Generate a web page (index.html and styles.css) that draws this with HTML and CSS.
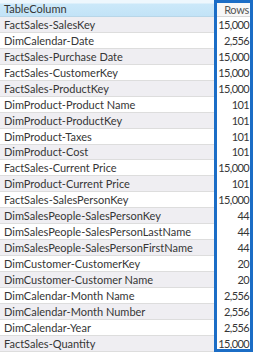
FILE: index.html
```html
<!DOCTYPE html>
<html>
<head>
<meta charset="utf-8">
<link rel="stylesheet" href="styles.css">
</head>
<body>
<div class="grid">
  <div class="col-name">
    <div class="hdr">TableColumn</div>
    <div class="cell">FactSales-SalesKey</div>
    <div class="cell">DimCalendar-Date</div>
    <div class="cell">FactSales-Purchase Date</div>
    <div class="cell">FactSales-CustomerKey</div>
    <div class="cell">FactSales-ProductKey</div>
    <div class="cell">DimProduct-Product Name</div>
    <div class="cell">DimProduct-ProductKey</div>
    <div class="cell">DimProduct-Taxes</div>
    <div class="cell">DimProduct-Cost</div>
    <div class="cell">FactSales-Current Price</div>
    <div class="cell">DimProduct-Current Price</div>
    <div class="cell">FactSales-SalesPersonKey</div>
    <div class="cell">DimSalesPeople-SalesPersonKey</div>
    <div class="cell">DimSalesPeople-SalesPersonLastName</div>
    <div class="cell">DimSalesPeople-SalesPersonFirstName</div>
    <div class="cell">DimCustomer-CustomerKey</div>
    <div class="cell">DimCustomer-Customer Name</div>
    <div class="cell">DimCalendar-Month Name</div>
    <div class="cell">DimCalendar-Month Number</div>
    <div class="cell">DimCalendar-Year</div>
    <div class="cell">FactSales-Quantity</div>
  </div>
  <div class="col-rows">
    <div class="hdr hdr-rows">Rows</div>
    <div class="cell num">15,000</div>
    <div class="cell num">2,556</div>
    <div class="cell num">15,000</div>
    <div class="cell num">15,000</div>
    <div class="cell num">15,000</div>
    <div class="cell num">101</div>
    <div class="cell num">101</div>
    <div class="cell num">101</div>
    <div class="cell num">101</div>
    <div class="cell num">15,000</div>
    <div class="cell num">101</div>
    <div class="cell num">15,000</div>
    <div class="cell num">44</div>
    <div class="cell num">44</div>
    <div class="cell num">44</div>
    <div class="cell num">20</div>
    <div class="cell num">20</div>
    <div class="cell num">2,556</div>
    <div class="cell num">2,556</div>
    <div class="cell num">2,556</div>
    <div class="cell num">15,000</div>
  </div>
</div>
</body>
</html>
```
FILE: styles.css
```css
html, body {
  margin: 0;
  padding: 0;
  background: #ffffff;
}
body {
  width: 253px;
  height: 352px;
  overflow: hidden;
  font-family: "Lato", "Open Sans", sans-serif;
  font-size: 11px;
  color: #363636;
}
.grid {
  display: flex;
  height: 352px;
}
.col-name {
  flex: 1;
  min-width: 0;
}
.col-rows {
  width: 39px;
  position: relative;
}
.col-rows::after {
  content: "";
  position: absolute;
  inset: 0;
  border: 3px solid #1b6dc6;
  pointer-events: none;
}
.hdr {
  height: 17px;
  box-sizing: border-box;
  padding: 0 4px;
  display: flex;
  align-items: center;
  background: linear-gradient(#eef7fd 0, #eef7fd 3px, #cbe8f9 4px, #c2e3f7 100%);
  border-bottom: 1px solid #b8d6e8;
}
.hdr-rows {
  justify-content: flex-end;
  background: #f7f7f7;
  border-left: 1px solid #c8c8c8;
  border-bottom: 1px solid #d8d8d8;
  padding: 3px 4px 0 0;
  color: #555555;
  letter-spacing: -0.3px;
}
.cell {
  height: 15.95px;
  box-sizing: border-box;
  padding: 0 4px;
  display: flex;
  align-items: center;
  white-space: nowrap;
  border-bottom: 1px solid #dddddd;
}
.col-name .cell:nth-child(even) {
  background: #efeef2;
}
.num {
  justify-content: flex-end;
  padding: 0 4px 0 0;
  letter-spacing: -0.6px;
  border-bottom-color: transparent;
}
```
